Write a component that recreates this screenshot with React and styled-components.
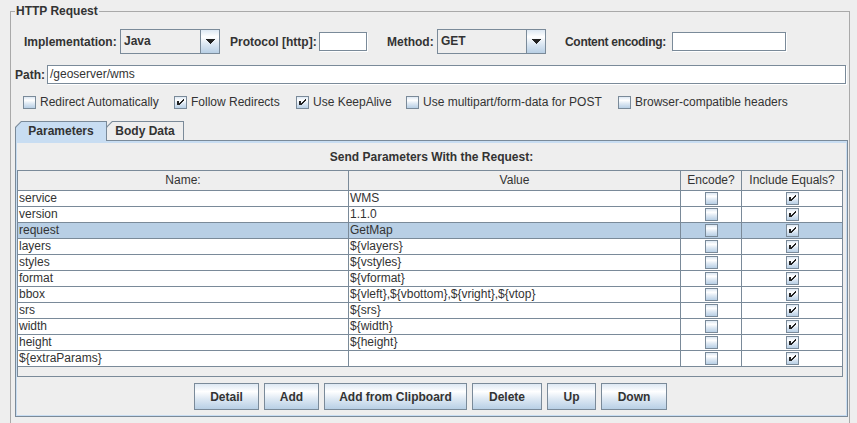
import React from "react";
import styled, { createGlobalStyle } from "styled-components";

const EDGE = "#7a8a99";
const TEXT = "#333333";
const BLUE = "#c8ddf2";
const SEL = "#b8cfe5";
const GRAD =
  "linear-gradient(to bottom, #dde8f3 0%, #ffffff 30%, #dde8f3 60%, #b8cfe5 100%)";

const Global = createGlobalStyle`
  html, body {
    margin: 0;
    padding: 0;
    width: 857px;
    height: 423px;
    overflow: hidden;
    background: #eeeeee;
  }
  body {
    font-family: "Liberation Sans", Arial, sans-serif;
    font-size: 12px;
    color: ${TEXT};
  }
  * { box-sizing: border-box; }
`;

const Root = styled.div`
  padding: 4px 7px 0 10px;
  height: 423px;
  overflow: hidden;
`;

const Group = styled.fieldset`
  margin: 0;
  padding: 0;
  min-width: 0;
  min-height: 440px;
  border: 1px solid #a9a9a9;
`;

const Legend = styled.legend`
  margin-left: 4px;
  padding: 0 1px;
  font-weight: bold;
  font-size: 12px;
  line-height: 14px;
  color: ${TEXT};
`;

const Body = styled.div`
  padding-top: 11px;
  display: flex;
  flex-direction: column;
`;

const Row = styled.div`
  display: flex;
  align-items: center;
  height: ${(p) => p.$h}px;
  margin-top: ${(p) => p.$mt || 0}px;
  padding-left: ${(p) => p.$pl || 0}px;
  padding-right: ${(p) => p.$pr || 0}px;
`;

const Label = styled.span`
  flex: none;
  font-weight: bold;
  white-space: nowrap;
  width: ${(p) => (p.$w ? `${p.$w}px` : "auto")};
  margin-left: ${(p) => p.$ml || 0}px;
  letter-spacing: ${(p) => (p.$tight ? "-0.3px" : "normal")};
`;

const TextField = styled.div`
  height: 19px;
  width: ${(p) => (p.$w ? `${p.$w}px` : "auto")};
  flex: ${(p) => (p.$grow ? 1 : "none")};
  margin-left: ${(p) => p.$ml || 0}px;
  background: #ffffff;
  border: 1px solid ${EDGE};
  box-shadow: 1px 1px 0 #ffffff;
  padding-left: 2px;
  line-height: 17px;
  white-space: nowrap;
`;

const Combo = styled.div`
  display: flex;
  flex: none;
  width: ${(p) => p.$w}px;
  height: 25px;
  margin-left: ${(p) => p.$ml || 0}px;
  border: 1px solid ${EDGE};
`;

const ComboText = styled.div`
  flex: 1;
  background: #eeeeee;
  padding-left: 3px;
  line-height: 23px;
  font-weight: bold;
`;

const ComboButton = styled.div`
  width: 19px;
  border-left: 1px solid ${EDGE};
  background: ${GRAD};
  display: flex;
  align-items: center;
  justify-content: center;
`;

const CheckItem = styled.label`
  display: flex;
  flex: none;
  align-items: center;
  gap: 4px;
  width: ${(p) => p.$w}px;
  white-space: nowrap;
  line-height: 15px;
`;

const Box = styled.span`
  width: 13px;
  height: 13px;
  flex: none;
  display: inline-flex;
  border: 1px solid ${EDGE};
  background: ${GRAD};
`;

const TabRow = styled.div`
  display: flex;
  align-items: flex-start;
  height: 19px;
  margin-top: 12px;
  margin-left: 4px;
`;

const TabOuter = styled.div`
  position: relative;
  z-index: ${(p) => (p.$active ? 2 : 1)};
  width: ${(p) => p.$w}px;
  height: ${(p) => (p.$active ? 20 : 19)}px;
  margin-left: ${(p) => p.$ml || 0}px;
  padding: 1px 1px 0 1px;
  background: ${EDGE};
  clip-path: polygon(6px 0, 100% 0, 100% 100%, 0 100%, 0 6px);
  display: flex;
`;

const TabInner = styled.div`
  flex: 1;
  background: ${(p) => (p.$active ? BLUE : "#eeeeee")};
  clip-path: polygon(5.5px 0, 100% 0, 100% 100%, 0 100%, 0 5.5px);
  font-weight: bold;
  text-align: center;
  line-height: 18px;
  white-space: nowrap;
`;

const Panel = styled.div`
  margin: 0 1px 0 4px;
  border: 1px solid ${EDGE};
  box-shadow: inset 0 2px 0 ${BLUE}, inset 1px 0 0 ${BLUE},
    inset -1px 0 0 ${BLUE}, inset 0 -1px 0 ${BLUE};
  padding: 9px 0 6px 0;
  display: flex;
  flex-direction: column;
`;

const PanelTitle = styled.div`
  text-align: center;
  font-weight: bold;
  line-height: 15px;
  margin-bottom: 5px;
`;

const Scroll = styled.div`
  margin: 0 4px 0 1px;
  height: 207px;
  border: 1px solid ${EDGE};
  background: #eeeeee;
`;

const GridRow = styled.div`
  display: grid;
  grid-template-columns: 331px 332px 61px 100px;
  background: ${(p) => (p.$head ? "#eeeeee" : p.$sel ? SEL : "#ffffff")};
`;

const Cell = styled.div`
  height: ${(p) => (p.$head ? 20 : 16)}px;
  border-right: 1px solid ${EDGE};
  border-bottom: 1px solid ${EDGE};
  padding-left: ${(p) => (p.$head ? 0 : 1)}px;
  line-height: ${(p) => (p.$head ? 19 : 15)}px;
  text-align: ${(p) => (p.$head ? "center" : "left")};
  white-space: nowrap;
  overflow: hidden;
  display: ${(p) => (p.$check ? "flex" : "block")};
  align-items: center;
  justify-content: center;
  &:last-child {
    border-right: none;
  }
`;

const Buttons = styled.div`
  display: flex;
  justify-content: center;
  gap: 5px;
  margin-top: 6px;
  padding-right: 2px;
`;

const Button = styled.button`
  width: ${(p) => p.$w}px;
  height: 27px;
  padding: 0;
  border: 1px solid ${EDGE};
  background: ${GRAD};
  font-family: "Liberation Sans", Arial, sans-serif;
  font-size: 12px;
  font-weight: bold;
  color: ${TEXT};
  white-space: nowrap;
  cursor: pointer;
`;

function Arrow() {
  return (
    <svg width="9" height="5" viewBox="0 0 9 5" shapeRendering="crispEdges">
      <polygon points="0,0 9,0 4.5,5" fill="#222" />
    </svg>
  );
}

const CHECK_PX = [
  [8, 2], [7, 3], [6, 4], [5, 5], [4, 6],
  [8, 3], [7, 4], [6, 5], [5, 6], [4, 7],
];

function CheckBox({ checked }) {
  return (
    <Box>
      {checked && (
        <svg width="11" height="11" viewBox="0 0 11 11" shapeRendering="crispEdges">
          <rect x="2" y="4" width="2" height="4" fill="#222" />
          {CHECK_PX.map(([x, y], i) => (
            <rect key={i} x={x} y={y} width="1" height="1" fill="#222" />
          ))}
        </svg>
      )}
    </Box>
  );
}

const rows = [
  ["service", "WMS"],
  ["version", "1.1.0"],
  ["request", "GetMap"],
  ["layers", "${vlayers}"],
  ["styles", "${vstyles}"],
  ["format", "${vformat}"],
  ["bbox", "${vleft},${vbottom},${vright},${vtop}"],
  ["srs", "${srs}"],
  ["width", "${width}"],
  ["height", "${height}"],
  ["${extraParams}", ""],
];

const options = [
  ["Redirect Automatically", false, 151],
  ["Follow Redirects", true, 122],
  ["Use KeepAlive", true, 110],
  ["Use multipart/form-data for POST", false, 212],
  ["Browser-compatible headers", false, 180],
];

const buttons = [
  ["Detail", 65],
  ["Add", 55],
  ["Add from Clipboard", 143],
  ["Delete", 70],
  ["Up", 49],
  ["Down", 66],
];

export default function App() {
  return (
    <>
      <Global />
      <Root>
        <Group>
          <Legend>HTTP Request</Legend>
          <Body>
            <Row $h={25} $pl={13}>
              <Label $w={92}>Implementation:</Label>
              <Combo $w={100} $ml={4}>
                <ComboText>Java</ComboText>
                <ComboButton>
                  <Arrow />
                </ComboButton>
              </Combo>
              <Label $w={84} $ml={10}>Protocol [http]:</Label>
              <TextField $w={48} $ml={5} />
              <Label $w={46} $ml={20}>Method:</Label>
              <Combo $w={109} $ml={4}>
                <ComboText>GET</ComboText>
                <ComboButton>
                  <Arrow />
                </ComboButton>
              </Combo>
              <Label $w={102} $ml={19} $tight>Content encoding:</Label>
              <TextField $w={114} $ml={5} />
            </Row>
            <Row $h={19} $mt={11} $pl={4} $pr={3}>
              <Label>Path:</Label>
              <TextField $grow $ml={2}>/geoserver/wms</TextField>
            </Row>
            <Row $h={13} $mt={12} $pl={12}>
              {options.map(([text, on, w]) => (
                <CheckItem key={text} $w={w}>
                  <CheckBox checked={on} />
                  {text}
                </CheckItem>
              ))}
            </Row>
            <TabRow>
              <TabOuter $active $w={92}>
                <TabInner $active>Parameters</TabInner>
              </TabOuter>
              <TabOuter $w={78} $ml={-1}>
                <TabInner>Body Data</TabInner>
              </TabOuter>
            </TabRow>
            <Panel>
              <PanelTitle>Send Parameters With the Request:</PanelTitle>
              <Scroll>
                <GridRow $head>
                  <Cell $head>Name:</Cell>
                  <Cell $head>Value</Cell>
                  <Cell $head>Encode?</Cell>
                  <Cell $head>Include Equals?</Cell>
                </GridRow>
                {rows.map(([name, value]) => (
                  <GridRow key={name} $sel={name === "request"}>
                    <Cell>{name}</Cell>
                    <Cell>{value}</Cell>
                    <Cell $check>
                      <CheckBox checked={false} />
                    </Cell>
                    <Cell $check>
                      <CheckBox checked />
                    </Cell>
                  </GridRow>
                ))}
              </Scroll>
              <Buttons>
                {buttons.map(([text, w]) => (
                  <Button key={text} $w={w}>
                    {text}
                  </Button>
                ))}
              </Buttons>
            </Panel>
          </Body>
        </Group>
      </Root>
    </>
  );
}
